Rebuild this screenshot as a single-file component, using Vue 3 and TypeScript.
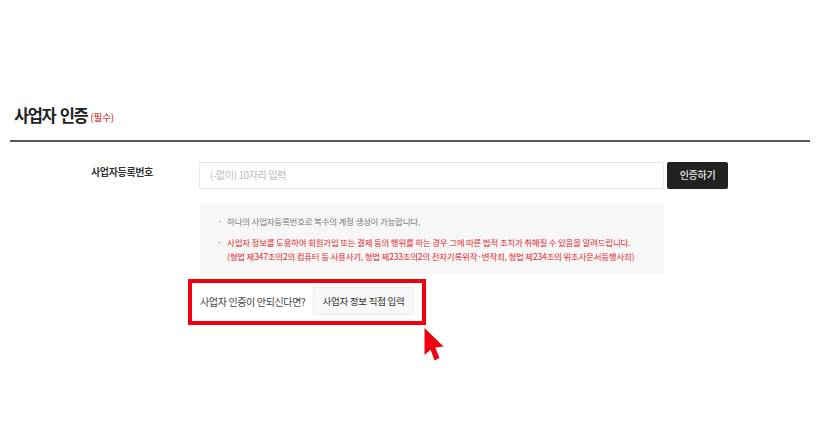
<script setup lang="ts">
const notices: { text: string[]; warn: boolean }[] = [
  { text: ['하나의 사업자등록번호로 복수의 계정 생성이 가능합니다.'], warn: false },
  {
    text: [
      '사업자 정보를 도용하여 회원가입 또는 결제 등의 행위를 하는 경우 그에 따른 법적 조치가 취해질 수 있음을 알려드립니다.',
      '(형법 제347조의2의 컴퓨터 등 사용사기, 형법 제233조의2의 전자기록위작·변작죄, 형법 제234조의 위조사문서등행사죄)',
    ],
    warn: true,
  },
]
</script>

<template>
  <div class="page">
    <div class="head">
      <h2 class="title">사업자 인증</h2>
      <span class="req">(필수)</span>
    </div>
    <div class="form">
      <div class="label">사업자등록번호</div>
      <div class="body">
        <div class="input-row">
          <input class="input" type="text" placeholder="(-없이) 10자리 입력" />
          <button class="btn-dark" type="button">인증하기</button>
        </div>
        <ul class="notice">
          <li v-for="(n, i) in notices" :key="i" :class="{ warn: n.warn }">
            <span class="dot">·</span>
            <div>
              <div v-for="(t, j) in n.text" :key="j" class="line">{{ t }}</div>
            </div>
          </li>
        </ul>
        <div class="manual">
          <span class="manual-text">사업자 인증이 안되신다면?</span>
          <button class="btn-light" type="button">사업자 정보 직접 입력</button>
          <span class="highlight"></span>
          <svg class="cursor" viewBox="0 0 20 33" width="20" height="33">
            <path d="M0.5 0 L19.5 18.5 L11.2 19.5 L15.5 30 L10.5 32.5 L6.6 21.8 L0.5 27 Z" fill="#f0000f" />
          </svg>
        </div>
      </div>
    </div>
  </div>
</template>

<style scoped>
.page {
  width: 828px;
  height: 435px;
  overflow: hidden;
  background: #fff;
  box-sizing: border-box;
  padding: 104px 18px 0 10px;
  font-family: "Noto Sans CJK KR", "Noto Sans", sans-serif;
}
.head {
  display: flex;
  align-items: center;
  gap: 3px;
  box-sizing: border-box;
  border-bottom: 2px solid #555;
  height: 38px;
  padding: 0 0 13px 4px;
}
.title {
  margin: 0;
  font-size: 16.5px;
  font-weight: 700;
  letter-spacing: -1.4px;
  word-spacing: 2px;
  color: #222;
  line-height: 25px;
}
.req {
  font-size: 9.5px;
  font-weight: 500;
  letter-spacing: -0.1px;
  color: #d43c42;
  margin-top: 2px;
}
.form {
  display: flex;
  padding-top: 20px;
}
.label {
  width: 189px;
  box-sizing: border-box;
  padding: 1px 0 0 81px;
  font-size: 10px;
  font-weight: 700;
  letter-spacing: -0.35px;
  color: #333;
  line-height: 18px;
  white-space: nowrap;
}
.body {
  position: relative;
  display: flex;
  flex-direction: column;
}
.input-row {
  display: flex;
  gap: 3px;
  height: 27px;
}
.input {
  width: 465px;
  height: 27px;
  box-sizing: border-box;
  border: 1px solid #e8e8e8;
  padding: 0 11px 2px 10px;
  font: inherit;
  font-size: 10px;
  letter-spacing: -0.4px;
  outline: none;
}
.input::placeholder {
  color: #bbb;
}
.btn-dark {
  width: 61px;
  height: 27px;
  border: 0;
  border-radius: 2px;
  background: #222;
  color: #eee;
  font: inherit;
  font-size: 10px;
  font-weight: 500;
  letter-spacing: -0.3px;
  padding: 0 0 2px;
}
.notice {
  list-style: none;
  margin: 14px 0 0 1px;
  padding: 11px 0 0 17px;
  width: 464px;
  height: 71px;
  box-sizing: border-box;
  background: #f7f7f7;
  font-size: 8.5px;
  letter-spacing: -0.22px;
  color: #777;
}
.notice li {
  display: flex;
  gap: 5.5px;
  margin-bottom: 7px;
}
.dot {
  line-height: 14px;
}
.line {
  line-height: 14px;
  white-space: nowrap;
}
.warn {
  color: #e3262d;
}
.manual {
  display: flex;
  align-items: center;
  gap: 9px;
  margin: 13px 0 0 1px;
  height: 28px;
  position: relative;
}
.manual-text {
  width: 104px;
  font-size: 10px;
  letter-spacing: -0.36px;
  color: #444;
  white-space: nowrap;
}
.btn-light {
  width: 101px;
  height: 28px;
  box-sizing: border-box;
  border: 1px solid #ececec;
  border-radius: 2px;
  background: #f8f8f8;
  color: #333;
  font: inherit;
  font-size: 9.5px;
  letter-spacing: -0.25px;
  padding: 0 0 1px;
  white-space: nowrap;
}
.highlight {
  position: absolute;
  left: -12px;
  top: -8px;
  width: 238px;
  height: 46px;
  box-sizing: border-box;
  border: 4px solid #f0000f;
  pointer-events: none;
}
.cursor {
  position: absolute;
  left: 224px;
  top: 41px;
}
</style>

<style>
body {
  margin: 0;
  background: #fff;
}
</style>
